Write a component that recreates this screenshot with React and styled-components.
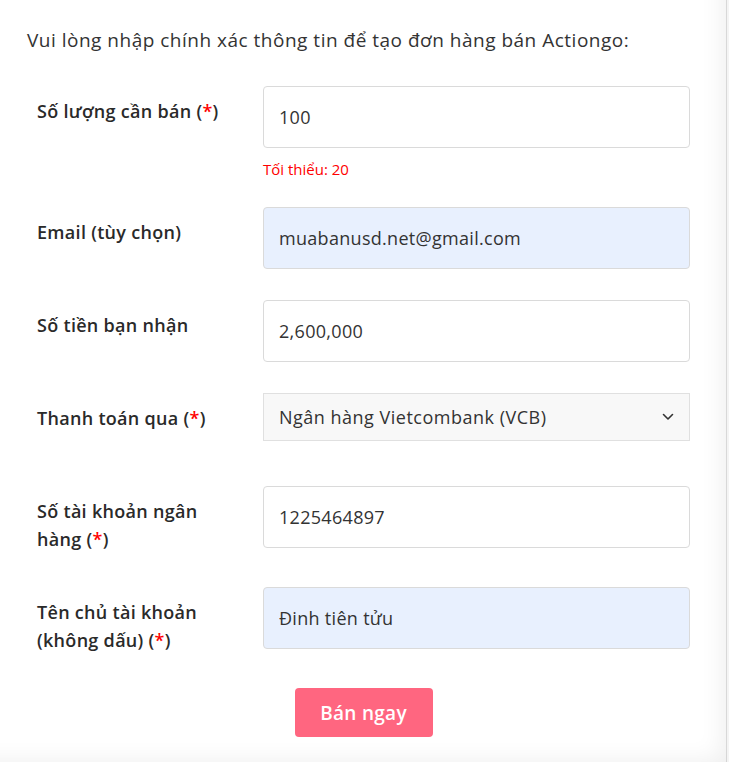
import React from "react";
import styled, { createGlobalStyle } from "styled-components";

const Global = createGlobalStyle`
  html, body { margin: 0; padding: 0; background: #ffffff; }
  body { font-family: "Open Sans", "Noto Sans", "Liberation Sans", sans-serif; color: #222; }
  * { box-sizing: border-box; }
`;

const Page = styled.div`
  width: 729px;
  height: 762px;
  overflow: hidden;
  background: #fff;
  border-right: 2px solid #f4f4f4;
  box-shadow: inset -26px -22px 24px -22px rgba(0, 0, 0, 0.07), inset -1px 0 0 #e2e2e2;
  padding: 28px 37px 0 27px;
`;

const Intro = styled.p`
  margin: 0 0 34px;
  font-size: 19px;
  line-height: 24px;
  letter-spacing: 0.5px;
  color: #333;
`;

const Form = styled.form`
  display: flex;
  flex-direction: column;
`;

const Row = styled.div`
  display: grid;
  grid-template-columns: 236px 1fr;
  align-items: start;
  margin-bottom: ${(p) => p.$mb}px;
`;

const Label = styled.label`
  padding: 11px 0 0 10px;
  font-size: 18px;
  line-height: 28px;
  font-weight: 600;
  letter-spacing: 0.3px;
  color: #2a2a2a;
`;

const Req = styled.span`
  color: #ff0000;
`;

const Field = styled.div`
  display: flex;
  flex-direction: column;
`;

const Input = styled.input`
  width: 100%;
  height: 62px;
  padding: 0 15px;
  border: 1px solid #dadada;
  border-radius: 4px;
  background: ${(p) => (p.$filled ? "#e8f0fe" : "#fff")};
  font-family: inherit;
  font-size: 18px;
  letter-spacing: 0.3px;
  color: #333;
  outline: none;
`;

const SelectBox = styled.div`
  display: flex;
  align-items: center;
  justify-content: space-between;
  height: 48px;
  padding: 0 15px;
  border: 1px solid #e0e0e0;
  background: #f8f8f8;
  font-size: 18px;
  letter-spacing: 0.5px;
  color: #333;
`;

const Hint = styled.div`
  margin-top: 12px;
  font-size: 15px;
  line-height: 18px;
  color: #ff0000;
`;

const Actions = styled.div`
  display: flex;
  justify-content: center;
  padding-left: 10px;
`;

const Button = styled.button`
  width: 138px;
  height: 49px;
  border: none;
  border-radius: 4px;
  background: #ff6680;
  color: #fff;
  font-family: inherit;
  font-size: 19px;
  font-weight: 600;
  letter-spacing: 0.3px;
  cursor: pointer;
`;

const Chevron = () => (
  <svg width="12" height="8" viewBox="0 0 12 8" fill="none" stroke="#333" strokeWidth="1.6" strokeLinecap="round" strokeLinejoin="round">
    <path d="M1.5 1.5 L6 6 L10.5 1.5" />
  </svg>
);

export default function App() {
  return (
    <>
      <Global />
      <Page>
        <Intro>Vui lòng nhập chính xác thông tin để tạo đơn hàng bán Actiongo:</Intro>
        <Form onSubmit={(e) => e.preventDefault()}>
          <Row $mb={29}>
            <Label>
              Số lượng cần bán (<Req>*</Req>)
            </Label>
            <Field>
              <Input defaultValue="100" />
              <Hint>Tối thiểu: 20</Hint>
            </Field>
          </Row>
          <Row $mb={31}>
            <Label>Email (tùy chọn)</Label>
            <Input $filled defaultValue="muabanusd.net@gmail.com" />
          </Row>
          <Row $mb={31}>
            <Label>Số tiền bạn nhận</Label>
            <Input defaultValue="2,600,000" />
          </Row>
          <Row $mb={45}>
            <Label>
              Thanh toán qua (<Req>*</Req>)
            </Label>
            <SelectBox>
              <span>Ngân hàng Vietcombank (VCB)</span>
              <Chevron />
            </SelectBox>
          </Row>
          <Row $mb={34}>
            <Label>
              Số tài khoản ngân
              <br />
              hàng (<Req>*</Req>)
            </Label>
            <Input defaultValue="1225464897" />
          </Row>
          <Row $mb={34}>
            <Label>
              Tên chủ tài khoản
              <br />
              (không dấu) (<Req>*</Req>)
            </Label>
            <Input $filled defaultValue="Đinh tiên tửu" />
          </Row>
          <Actions>
            <Button type="submit">Bán ngay</Button>
          </Actions>
        </Form>
      </Page>
    </>
  );
}
